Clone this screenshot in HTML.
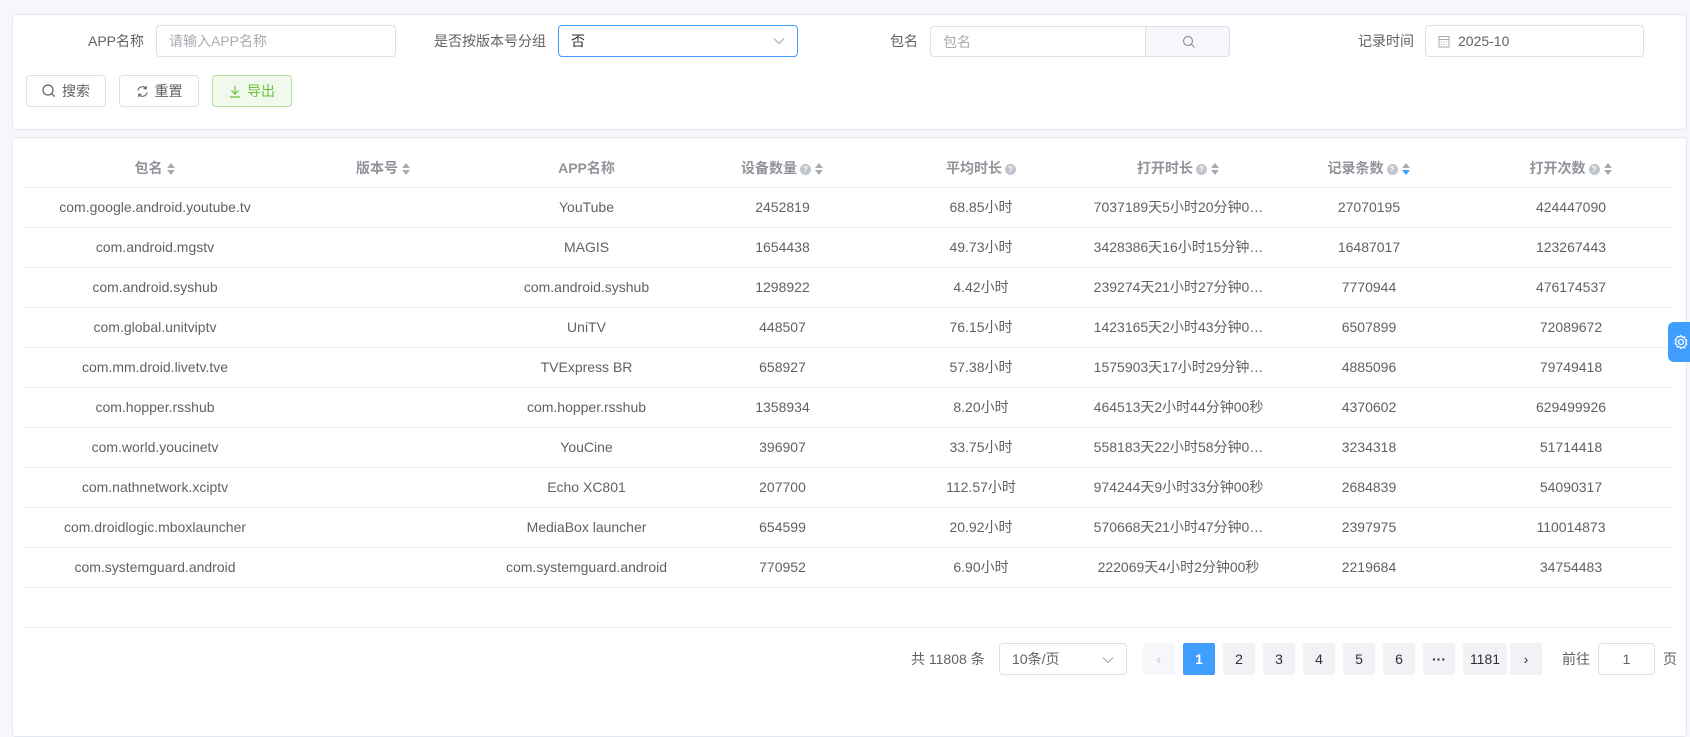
<!DOCTYPE html>
<html><head><meta charset="utf-8"><style>
*{box-sizing:border-box;margin:0;padding:0}
body{width:1690px;height:687px;overflow:hidden;background:#f5f7fa;font-family:"Liberation Sans","Noto Sans CJK SC",sans-serif;font-size:14px;color:#606266;position:relative}
.card{position:absolute;background:#fff;border:1px solid #e4e7ed;border-radius:4px}
.abs{position:absolute}
.lbl{position:absolute;color:#606266;font-size:14px;line-height:32px;text-align:right}
.inp{position:absolute;height:32px;border:1px solid #dcdfe6;border-radius:4px;background:#fff;line-height:30px;padding-left:12px;font-size:14px}
.ph{color:#a8abb2}
.btn{position:absolute;top:75px;height:32px;border:1px solid #dcdfe6;border-radius:4px;background:#fff;line-height:30px;font-size:14px;color:#606266;display:flex;align-items:center;justify-content:center;gap:6px}
table{position:absolute;left:26px;top:137px;border-collapse:collapse;table-layout:fixed}
th{height:50px;padding-top:12px;color:#909399;font-weight:bold;font-size:14px;border-bottom:1px solid #ebeef5;text-align:center}
td{height:40px;line-height:20px;text-align:center;vertical-align:middle;border-bottom:1px solid #ebeef5;white-space:nowrap;overflow:hidden;font-size:14px}
.car{display:inline-block;vertical-align:middle;margin-left:4px;width:9px;height:14px;position:relative}
.car:before{content:"";position:absolute;left:0;top:1px;border:4.5px solid transparent;border-bottom:5px solid #a8abb2;border-top:0}
.car:after{content:"";position:absolute;left:0;top:8px;border:4.5px solid transparent;border-top:5px solid #a8abb2;border-bottom:0}
.car.d:after{border-top-color:#409eff}
.q{display:inline-block;vertical-align:middle;width:11px;height:11px;border-radius:50%;background:#c0c4cc;color:#fff;font-size:8px;line-height:11px;text-align:center;margin-left:3px;font-weight:bold}
.pg{position:absolute;top:643px;height:32px;width:32px;background:#f0f2f5;border-radius:2px;text-align:center;line-height:32px;font-size:14px;color:#303133}
</style></head><body>
<div class="card" style="left:12px;top:14px;width:1675px;height:116px"></div>
<div class="lbl" style="left:60px;top:25px;width:84px">APP名称</div>
<div class="inp ph" style="left:156px;top:25px;width:240px">请输入APP名称</div>
<div class="lbl" style="left:400px;top:25px;width:146px">是否按版本号分组</div>
<div class="inp" style="left:558px;top:25px;width:240px;border-color:#409eff;color:#303133">否
<svg class="abs" style="right:12px;top:11px" width="12" height="8" viewBox="0 0 12 8"><path d="M1 1.5l5 5 5-5" fill="none" stroke="#a8abb2" stroke-width="1.2"/></svg></div>
<div class="lbl" style="left:880px;top:25px;width:38px">包名</div>
<div class="inp ph" style="left:930px;top:26px;width:300px;height:31px">包名</div>
<div class="abs" style="left:1145px;top:26px;width:85px;height:31px;background:#f5f7fa;border:1px solid #dcdfe6;border-radius:0 4px 4px 0"><svg class="abs" style="left:36px;top:8px" width="14" height="14" viewBox="0 0 14 14"><circle cx="6" cy="6" r="4.5" fill="none" stroke="#909399" stroke-width="1.2"/><path d="M9.5 9.5l3 3" stroke="#909399" stroke-width="1.2"/></svg></div>
<div class="lbl" style="left:1340px;top:25px;width:74px">记录时间</div>
<div class="inp" style="left:1425px;top:25px;width:219px;padding-left:32px;color:#606266">2025-10
<svg class="abs" style="left:12px;top:9px" width="12" height="13" viewBox="0 0 12 13"><rect x="1" y="1.5" width="10" height="10.5" fill="none" stroke="#a8abb2"/><path d="M1 4.5h10M3 7h1M5.5 7h1M8 7h1M3 9.5h1M5.5 9.5h1" stroke="#a8abb2"/></svg></div>
<div class="btn" style="left:26px;width:80px"><svg width="14" height="14" viewBox="0 0 14 14"><circle cx="6" cy="6" r="5" fill="none" stroke="#606266" stroke-width="1.2"/><path d="M9.7 9.7l3 3" stroke="#606266" stroke-width="1.2"/></svg>搜索</div>
<div class="btn" style="left:119px;width:80px"><svg width="13" height="13" viewBox="0 0 14 14"><path d="M2 6a5 5 0 0 1 9-2M12 8a5 5 0 0 1-9 2" fill="none" stroke="#606266" stroke-width="1.2"/><path d="M11 1v3H8M3 13v-3h3" fill="none" stroke="#606266" stroke-width="1.2"/></svg>重置</div>
<div class="btn" style="left:212px;width:80px;background:#f0f9eb;border-color:#b3e19d;color:#67c23a"><svg width="12" height="13" viewBox="0 0 12 13"><path d="M6 1v8M2.5 5.5L6 9l3.5-3.5M1 12h10" fill="none" stroke="#67c23a" stroke-width="1.2"/></svg>导出</div>

<div class="card" style="left:12px;top:137px;width:1675px;height:600px"></div>
<table>
<colgroup><col style="width:258px"><col style="width:199px"><col style="width:207px"><col style="width:185px"><col style="width:212px"><col style="width:183px"><col style="width:198px"><col style="width:206px"></colgroup>
<tr><th>包名<span class="car"></span></th><th>版本号<span class="car"></span></th><th>APP名称</th><th>设备数量<span class="q">?</span><span class="car"></span></th><th>平均时长<span class="q">?</span></th><th>打开时长<span class="q">?</span><span class="car"></span></th><th>记录条数<span class="q">?</span><span class="car d"></span></th><th>打开次数<span class="q">?</span><span class="car"></span></th></tr>
<tr><td>com.google.android.youtube.tv</td><td></td><td>YouTube</td><td>2452819</td><td>68.85小时</td><td>7037189天5小时20分钟0…</td><td>27070195</td><td>424447090</td></tr>
<tr><td>com.android.mgstv</td><td></td><td>MAGIS</td><td>1654438</td><td>49.73小时</td><td>3428386天16小时15分钟…</td><td>16487017</td><td>123267443</td></tr>
<tr><td>com.android.syshub</td><td></td><td>com.android.syshub</td><td>1298922</td><td>4.42小时</td><td>239274天21小时27分钟0…</td><td>7770944</td><td>476174537</td></tr>
<tr><td>com.global.unitviptv</td><td></td><td>UniTV</td><td>448507</td><td>76.15小时</td><td>1423165天2小时43分钟0…</td><td>6507899</td><td>72089672</td></tr>
<tr><td>com.mm.droid.livetv.tve</td><td></td><td>TVExpress BR</td><td>658927</td><td>57.38小时</td><td>1575903天17小时29分钟…</td><td>4885096</td><td>79749418</td></tr>
<tr><td>com.hopper.rsshub</td><td></td><td>com.hopper.rsshub</td><td>1358934</td><td>8.20小时</td><td>464513天2小时44分钟00秒</td><td>4370602</td><td>629499926</td></tr>
<tr><td>com.world.youcinetv</td><td></td><td>YouCine</td><td>396907</td><td>33.75小时</td><td>558183天22小时58分钟0…</td><td>3234318</td><td>51714418</td></tr>
<tr><td>com.nathnetwork.xciptv</td><td></td><td>Echo XC801</td><td>207700</td><td>112.57小时</td><td>974244天9小时33分钟00秒</td><td>2684839</td><td>54090317</td></tr>
<tr><td>com.droidlogic.mboxlauncher</td><td></td><td>MediaBox launcher</td><td>654599</td><td>20.92小时</td><td>570668天21小时47分钟0…</td><td>2397975</td><td>110014873</td></tr>
<tr><td>com.systemguard.android</td><td></td><td>com.systemguard.android</td><td>770952</td><td>6.90小时</td><td>222069天4小时2分钟00秒</td><td>2219684</td><td>34754483</td></tr>
</table>
<div class="abs" style="left:26px;top:627px;width:1648px;height:1px;background:#ebeef5"></div>

<div class="abs" style="left:911px;top:643px;line-height:32px">共 11808 条</div>
<div class="inp" style="left:999px;top:643px;width:128px;color:#606266">10条/页<svg class="abs" style="right:12px;top:12px" width="12" height="8" viewBox="0 0 12 8"><path d="M1 1.5l5 5 5-5" fill="none" stroke="#a8abb2" stroke-width="1.2"/></svg></div>
<div class="pg" style="left:1143px;color:#c0c4cc;background:#f5f7fa">‹</div>
<div class="pg" style="left:1183px;background:#409eff;color:#fff;font-weight:bold">1</div>
<div class="pg" style="left:1223px">2</div>
<div class="pg" style="left:1263px">3</div>
<div class="pg" style="left:1303px">4</div>
<div class="pg" style="left:1343px">5</div>
<div class="pg" style="left:1383px">6</div>
<div class="pg" style="left:1423px;font-weight:bold">···</div>
<div class="pg" style="left:1463px;width:44px">1181</div>
<div class="pg" style="left:1510px">›</div>
<div class="abs" style="left:1562px;top:643px;line-height:32px">前往</div>
<div class="inp" style="left:1598px;top:643px;width:57px;padding:0;text-align:center;color:#606266">1</div>
<div class="abs" style="left:1663px;top:643px;line-height:32px">页</div>

<div class="abs" style="left:1668px;top:322px;width:30px;height:40px;background:#409eff;border-radius:6px 0 0 6px"><svg class="abs" style="left:5px;top:12px" width="16" height="16" viewBox="0 0 16 16"><circle cx="8" cy="8" r="2.5" fill="none" stroke="#fff" stroke-width="1.3"/><path d="M8 1.5l1.3 1.8 2.2-.5.5 2.2 1.8 1.3-1 2 1 2-1.8 1.3-.5 2.2-2.2-.5L8 14.5l-1.3-1.8-2.2.5-.5-2.2L2.2 9.7l1-2-1-2L4 4.5l.5-2.2 2.2.5z" fill="none" stroke="#fff" stroke-width="1.2"/></svg></div>
</body></html>
